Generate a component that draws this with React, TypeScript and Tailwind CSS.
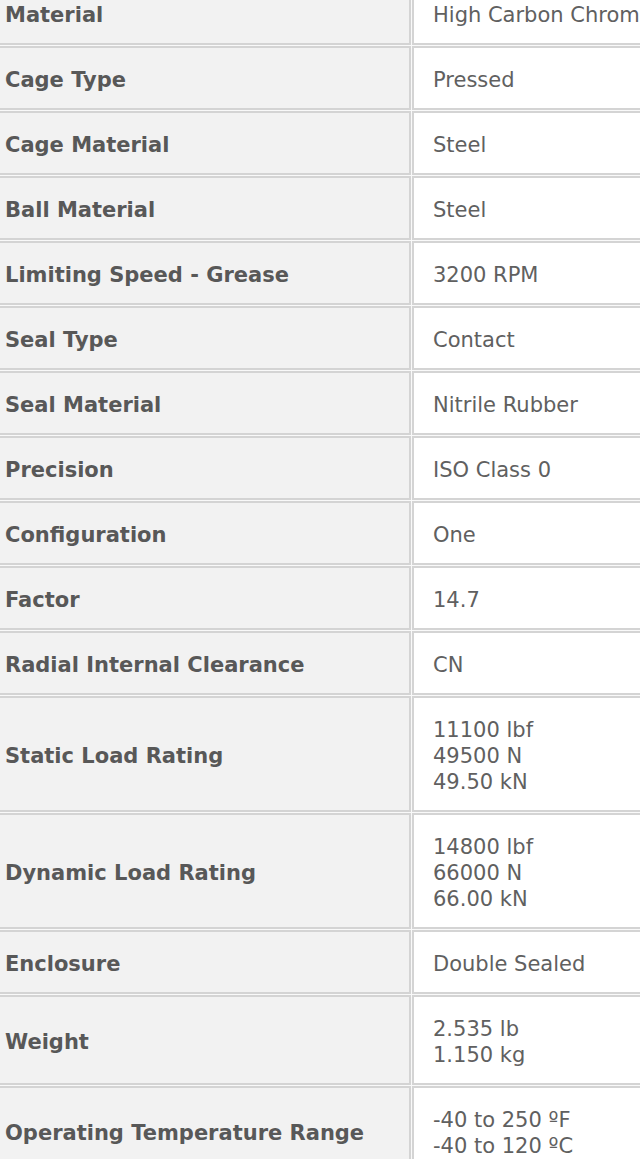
const specs: { label: string; value: string[] }[] = [
  { label: 'Material', value: ['High Carbon Chrome Steel'] },
  { label: 'Cage Type', value: ['Pressed'] },
  { label: 'Cage Material', value: ['Steel'] },
  { label: 'Ball Material', value: ['Steel'] },
  { label: 'Limiting Speed - Grease', value: ['3200 RPM'] },
  { label: 'Seal Type', value: ['Contact'] },
  { label: 'Seal Material', value: ['Nitrile Rubber'] },
  { label: 'Precision', value: ['ISO Class 0'] },
  { label: 'Configuration', value: ['One'] },
  { label: 'Factor', value: ['14.7'] },
  { label: 'Radial Internal Clearance', value: ['CN'] },
  { label: 'Static Load Rating', value: ['11100 lbf', '49500 N', '49.50 kN'] },
  { label: 'Dynamic Load Rating', value: ['14800 lbf', '66000 N', '66.00 kN'] },
  { label: 'Enclosure', value: ['Double Sealed'] },
  { label: 'Weight', value: ['2.535 lb', '1.150 kg'] },
  { label: 'Operating Temperature Range', value: ['-40 to 250 ºF', '-40 to 120 ºC'] },
];

export default function App() {
  return (
    <div className="h-[1159px] w-[640px] overflow-hidden bg-[#f9f9f9] font-['DejaVu_Sans',sans-serif] text-[21px] leading-[26px]">
      <div className="-mt-[19px] flex flex-col gap-px">
        {specs.map((row) => (
          <div key={row.label} className="grid grid-cols-[411px_1fr] gap-px">
            <div className="flex items-center whitespace-nowrap border-y-2 border-r-2 border-[#d4d4d4] bg-[#f2f2f2] pt-[19px] pb-[15px] pl-[5px] font-bold text-[#585858]">
              {row.label}
            </div>
            <div className="overflow-hidden whitespace-nowrap border-y-2 border-l-2 border-[#d4d4d4] bg-white pt-[19px] pb-[15px] pl-[19px] text-[#606060]">
              {row.value.map((line) => (
                <div key={line}>{line}</div>
              ))}
            </div>
          </div>
        ))}
      </div>
    </div>
  );
}
